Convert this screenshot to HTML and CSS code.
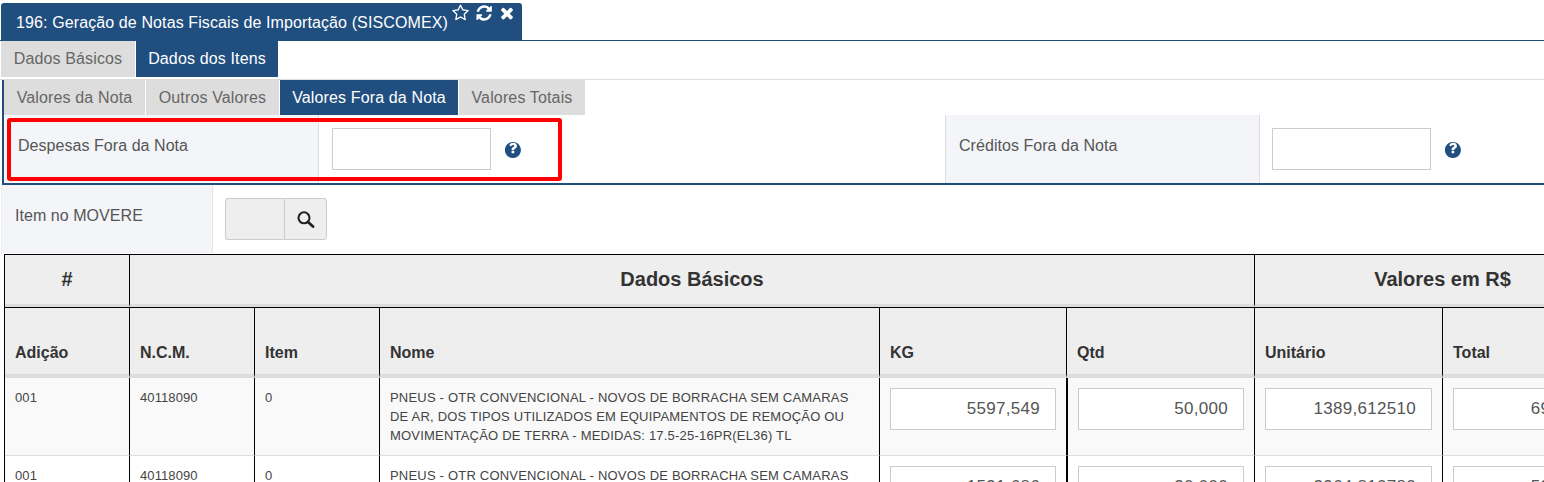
FILE: index.html
```html
<!DOCTYPE html>
<html lang="pt-BR">
<head>
<meta charset="utf-8">
<title>Geração de Notas Fiscais de Importação</title>
<link rel="stylesheet" href="styles.css">
</head>
<body>
<header class="titlebar">
  <div class="title-tab">
    <span class="title-text">196: Geração de Notas Fiscais de Importação (SISCOMEX)</span>
    <span class="title-icons">
      <svg class="ti ti-star" viewBox="0 0 1664 1792"><path d="M1137 1004l306-297-422-62-189-382-189 382-422 62 306 297-73 421 378-199 377 199zm527-357q0 22-26 48l-363 354 86 500q1 7 1 20 0 50-41 50-19 0-40-12l-449-236-449 236q-22 12-40 12-21 0-31.500-14.500t-10.500-35.500q0-6 2-20l86-500-364-354q-25-27-25-48 0-37 56-46l502-73 225-455q19-41 49-41t49 41l225 455 502 73q56 9 56 46z"/></svg>
      <svg class="ti ti-refresh" viewBox="0 0 1664 1792"><path d="M1639 1056q0 5-1 7-64 268-268 434.500t-478 166.500q-146 0-282.500-55t-243.500-157l-129 129q-19 19-45 19t-45-19-19-45v-448q0-26 19-45t45-19h448q26 0 45 19t19 45-19 45l-137 137q71 66 161 102t187 36q134 0 250-65t186-179q11-17 53-117 8-23 30-23h192q13 0 22.500 9.500t9.500 22.500zm25-800v448q0 26-19 45t-45 19h-448q-26 0-45-19t-19-45 19-45l138-138q-148-137-349-137-134 0-250 65t-186 179q-11 17-53 117-8 23-30 23h-199q-13 0-22.500-9.500t-9.500-22.500v-7q65-268 270-434.500t480-166.500q146 0 284 55.500t245 156.500l130-129q19-19 45-19t45 19 19 45z"/></svg>
      <svg class="ti ti-times" viewBox="0 0 1408 1792"><path d="M1298 1322q0 40-28 68l-136 136q-28 28-68 28t-68-28l-294-294-294 294q-28 28-68 28t-68-28l-136-136q-28-28-28-68t28-68l294-294-294-294q-28-28-28-68t28-68l136-136q28-28 68-28t68 28l294 294 294-294q28-28 68-28t68 28l136 136q28 28 28 68t-28 68l-294 294 294 294q28 28 28 68z"/></svg>
    </span>
  </div>
</header>

<nav class="tabs tabs-main">
  <a class="tab tab-w1">Dados Básicos</a>
  <a class="tab tab-w2 active">Dados dos Itens</a>
</nav>

<section class="panel">
  <nav class="tabs tabs-sub">
    <a class="tab tab-s1">Valores da Nota</a>
    <a class="tab tab-s2">Outros Valores</a>
    <a class="tab tab-s3 active">Valores Fora da Nota</a>
    <a class="tab tab-s4">Valores Totais</a>
  </nav>
  <div class="form-row">
    <div class="field-label field-first">Despesas Fora da Nota</div>
    <div class="field-value">
      <input class="text-input" type="text">
      <svg class="help" viewBox="0 128 1536 1536"><path d="M888 1184v-192q0-14-9-23t-23-9h-192q-14 0-23 9t-9 23v192q0 14 9 23t23 9h192q14 0 23-9t9-23zm256-672q0-88-55.500-163t-138.500-116-170-41q-243 0-371 213-15 24 8 42l132 100q7 6 19 6 16 0 25-12 53-68 86-92 34-24 86-24 48 0 85.500 26t37.500 59q0 38-20 61t-68 45q-63 28-115.500 86.500t-52.500 125.500v36q0 14 9 23t23 9h192q14 0 23-9t9-23q0-19 21.500-49.500t54.500-49.500q32-18 49-28.500t46-35 44.500-48 28-60.500 12.500-81zm384 384q0 209-103 385.500t-279.500 279.500-385.500 103-385.500-103-279.500-279.500-103-385.500 103-385.500 279.500-279.500 385.500-103 385.500 103 279.500 279.500 103 385.500z"/></svg>
    </div>
    <div class="field-label field-second">Créditos Fora da Nota</div>
    <div class="field-value">
      <input class="text-input" type="text">
      <svg class="help" viewBox="0 128 1536 1536"><path d="M888 1184v-192q0-14-9-23t-23-9h-192q-14 0-23 9t-9 23v192q0 14 9 23t23 9h192q14 0 23-9t9-23zm256-672q0-88-55.500-163t-138.500-116-170-41q-243 0-371 213-15 24 8 42l132 100q7 6 19 6 16 0 25-12 53-68 86-92 34-24 86-24 48 0 85.500 26t37.500 59q0 38-20 61t-68 45q-63 28-115.500 86.500t-52.500 125.500v36q0 14 9 23t23 9h192q14 0 23-9t9-23q0-19 21.500-49.500t54.500-49.500q32-18 49-28.500t46-35 44.500-48 28-60.500 12.500-81zm384 384q0 209-103 385.500t-279.500 279.500-385.500 103-385.500-103-279.500-279.500-103-385.500 103-385.500 279.500-279.500 385.500-103 385.500 103 279.500 279.500 103 385.500z"/></svg>
    </div>
    <div class="highlight"></div>
  </div>
</section>

<section class="item-row">
  <div class="item-label">Item no MOVERE</div>
  <div class="item-value">
    <div class="lookup">
      <input class="lookup-input" type="text" disabled>
      <button class="lookup-btn" type="button">
        <svg class="search" viewBox="0 0 18 17"><circle cx="7" cy="6.800" r="5.500"/><line x1="11" y1="11" x2="16" y2="15.500"/></svg>
      </button>
    </div>
  </div>
</section>

<table class="grid">
  <colgroup>
    <col class="c125"><col class="c125"><col class="c125"><col class="c500">
    <col class="c187"><col class="c188"><col class="c188"><col class="c188">
  </colgroup>
  <thead>
    <tr class="group-row">
      <th>#</th>
      <th colspan="5">Dados Básicos</th>
      <th colspan="2">Valores em R$</th>
    </tr>
    <tr class="col-row">
      <th>Adição</th><th>N.C.M.</th><th>Item</th><th>Nome</th>
      <th>KG</th><th>Qtd</th><th>Unitário</th><th>Total</th>
    </tr>
  </thead>
  <tbody>
    <tr class="odd">
      <td>001</td><td>40118090</td><td>0</td>
      <td class="name">PNEUS - OTR CONVENCIONAL - NOVOS DE BORRACHA SEM CAMARAS DE AR, DOS TIPOS UTILIZADOS EM EQUIPAMENTOS DE REMOÇÃO OU MOVIMENTAÇÃO DE TERRA - MEDIDAS: 17.5-25-16PR(EL36) TL</td>
      <td><input class="num" type="text" value="5597,549"></td>
      <td class="thick"><input class="num" type="text" value="50,000"></td>
      <td><input class="num" type="text" value="1389,612510"></td>
      <td><input class="num" type="text" value="69480,63"></td>
    </tr>
    <tr>
      <td>001</td><td>40118090</td><td>0</td>
      <td class="name">PNEUS - OTR CONVENCIONAL - NOVOS DE BORRACHA SEM CAMARAS DE AR, DOS TIPOS UTILIZADOS EM EQUIPAMENTOS DE REMOÇÃO OU MOVIMENTAÇÃO DE TERRA - MEDIDAS: 17.5-25-16PR(EL36) TL</td>
      <td><input class="num" type="text" value="1591,686"></td>
      <td class="thick"><input class="num" type="text" value="20,000"></td>
      <td><input class="num" type="text" value="2964,810780"></td>
      <td><input class="num" type="text" value="59296,22"></td>
    </tr>
  </tbody>
</table>
</body>
</html>
```
FILE: styles.css
```css
* { box-sizing: border-box; }
html, body { margin: 0; padding: 0; height: 482px; overflow: hidden; background: #fff; }
body { font-family: "Liberation Sans", Arial, sans-serif; color: #555; font-size: 16px; width: 1544px; }

.titlebar { height: 41px; padding: 3px 0 0 1px; border-bottom: 1px solid #1f4e7f; }
.title-tab { width: 521px; height: 37px; background: #1f4e7f; color: #fff; border-radius: 3px 3px 0 0; display: flex; padding-left: 15px; position: relative; }
.title-text { line-height: 39px; white-space: nowrap; letter-spacing: .11px; }
.title-icons { display: flex; align-items: flex-start; }
.ti { fill: #fff; display: block; }
.ti-star { width: 17px; height: 18px; margin: 1px 0 0 4px; }
.ti-refresh { width: 17px; height: 18px; margin: 1px 0 0 6px; }
.ti-times { width: 14px; height: 18px; margin: 1px 0 0 8px; }

.tabs { display: flex; }
.tab { display: block; background: #ddd; color: #666; text-align: center; white-space: nowrap; letter-spacing: .14px; }
.tab.active { background: #1f4e7f; color: #fff; }
.tabs-main { height: 39px; padding: 0 0 2px 1px; gap: 1px; border-bottom: 1px solid #ddd; }
.tabs-main .tab { line-height: 35px; height: 36px; }
.tab-w1 { width: 134px; }
.tab-w2 { width: 142px; }

.panel { margin-left: 2px; border-left: 2px solid #1f4e7f; }
.tabs-sub { height: 35px; gap: 1px; }
.tabs-sub .tab { line-height: 35px; }
.tab-s1 { width: 141px; }
.tab-s2 { width: 133px; }
.tab-s3 { width: 178px; }
.tab-s4 { width: 126px; }

.form-row { position: relative; display: grid; grid-template-columns: 315px 626px 315px 1fr; height: 70px; border-bottom: 2px solid #1f4e7f; }
.field-label { background: #f3f5f9; padding: 22px 0 0 14px; border-right: 1px solid #ddd; color: #555; line-height: 18px; letter-spacing: .05px; }
.field-second { border-left: 1px solid #ddd; padding-left: 13px; }
.field-value { display: flex; align-items: flex-start; padding: 13px 0 0 13px; }
.field-second + .field-value { padding-left: 12px; }
.text-input { width: 159px; height: 42px; border: 1px solid #ccc; background: #fff; border-radius: 0; margin: 0; padding: 0; display: block; }
.help { width: 16px; height: 16px; fill: #1f4e7f; margin: 14px 0 0 14px; }
.highlight { position: absolute; left: 3px; top: 3px; width: 555px; height: 63px; border: 4px solid #f00; border-radius: 3px; pointer-events: none; }

.item-row { display: flex; height: 69px; margin-left: 1px; border-left: 1px solid #eee; }
.item-label { width: 211px; background: #f3f5f9; border-right: 1px solid #e6e6e6; padding: 22px 0 0 13px; height: 68px; line-height: 18px; letter-spacing: .05px; }
.item-value { padding: 13px 0 0 12px; }
.lookup { display: flex; height: 42px; }
.lookup-input { width: 59px; height: 42px; background: #eee; border: 1px solid #ccc; border-right: 0; border-radius: 3px 0 0 3px; margin: 0; padding: 0; }
.lookup-btn { width: 43px; height: 42px; background: #eee; border: 1px solid #ccc; border-radius: 0 3px 3px 0; padding: 0; margin: 0; display: flex; align-items: center; justify-content: center; }
.search { width: 18px; height: 17px; display: block; fill: none; stroke: #222; }
.search circle { stroke-width: 2.1; }
.search line { stroke-width: 2.8; stroke-linecap: round; }

.grid { margin-left: 4px; width: 1626px; table-layout: fixed; border-collapse: separate; border-spacing: 0; border-top: 1px solid #000; border-left: 1px solid #000; }
.c125 { width: 125px; }
.c500 { width: 500px; }
.c187 { width: 187px; }
.c188 { width: 188px; }
.grid th { background: #eee; color: #333; font-weight: bold; border-right: 1px solid #000; padding: 0; }
.group-row th { height: 52px; font-size: 20px; text-align: center; border-bottom: 3px solid #ddd; }
.col-row th { height: 71px; font-size: 16px; text-align: left; vertical-align: bottom; padding: 0 10px 12px 10px; border-top: 1px solid #000; border-bottom: 4px solid #ddd; line-height: 18px; }
.grid td { font-size: 13px; line-height: 19px; color: #444; vertical-align: top; padding: 10px; border-right: 1px solid #000; border-bottom: 1px solid #ddd; background: #fff; letter-spacing: .1px; }
.grid td.name { font-size: 13px; letter-spacing: .2px; }
.odd td { background: #f9f9f9; }
.grid td.thick { border-left: 1px solid #000; }
.num { width: 100%; height: 42px; border: 1px solid #ccc; background: #fff; text-align: right; font: 17px "Liberation Sans", Arial, sans-serif; letter-spacing: .3px; color: #555; padding: 0 15px; margin: 0; display: block; border-radius: 0; }
```
